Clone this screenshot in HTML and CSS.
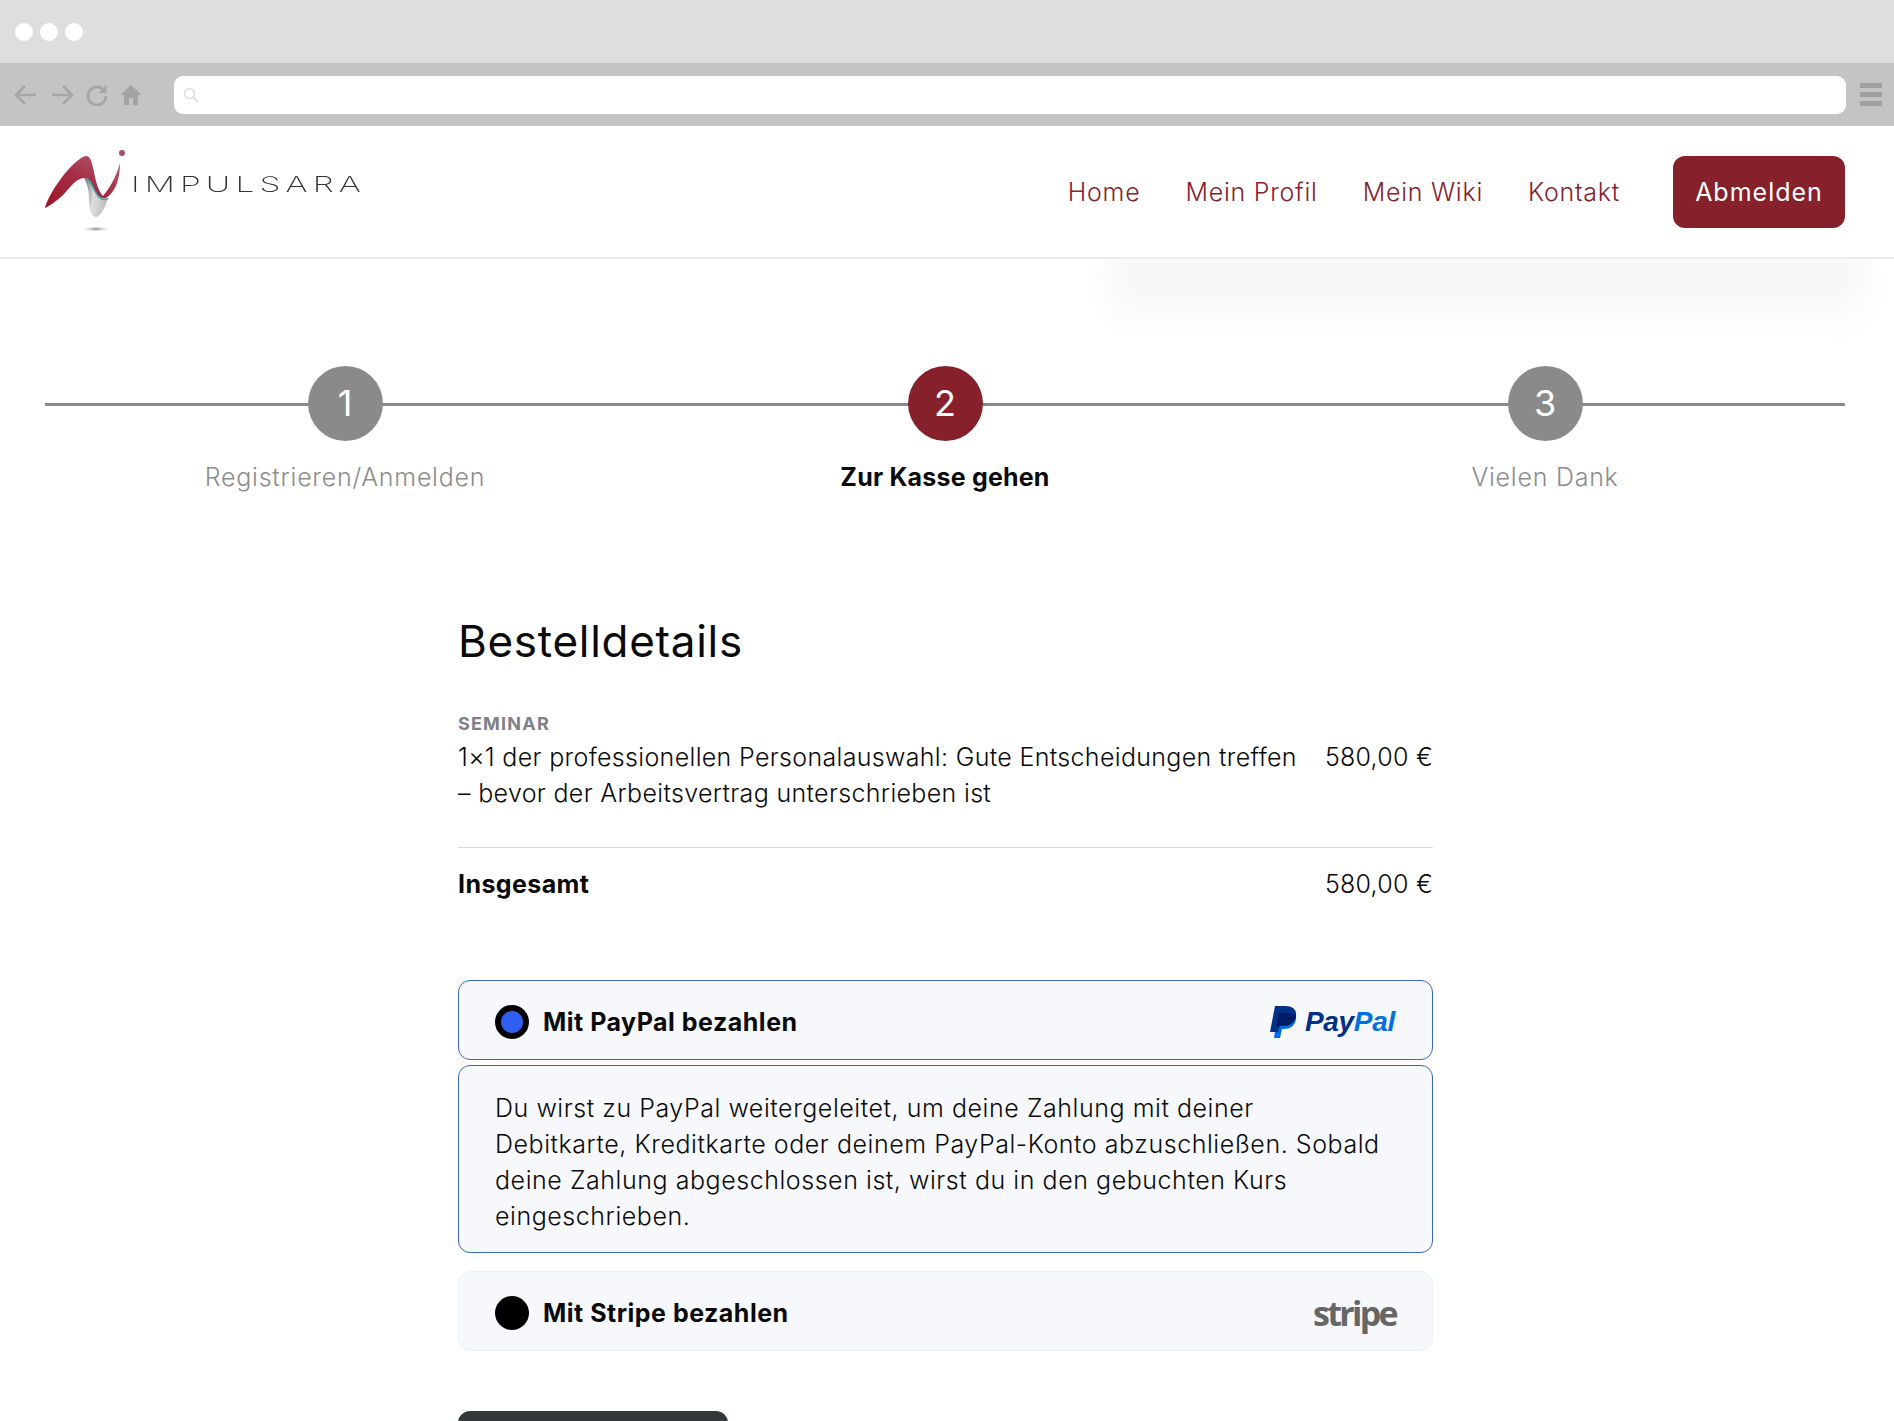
FILE: index.html
```html
<!DOCTYPE html>
<html lang="de">
<head>
<meta charset="utf-8">
<title>Impulsara – Zur Kasse</title>
<link rel="stylesheet" href="styles.css">
</head>
<body>
<div class="browser-top">
  <span class="dot"></span><span class="dot"></span><span class="dot"></span>
</div>
<div class="browser-bar">
  <div class="browser-icons">
    <svg class="bi" width="24" height="24" viewBox="0 0 24 24"><path d="M22 12H2M11 3l-9 9 9 9" fill="none" stroke="#a6a6a6" stroke-width="2.600"/></svg>
    <svg class="bi" width="24" height="24" viewBox="0 0 24 24"><path d="M2 12h20M13 3l9 9-9 9" fill="none" stroke="#a6a6a6" stroke-width="2.600"/></svg>
    <svg class="bi" width="22" height="22" viewBox="0 0 22 22"><path d="M18.500 7A9 9 0 1 0 20 12" fill="none" stroke="#a6a6a6" stroke-width="2.800"/><path d="M20.500 1v8h-8z" fill="#a6a6a6"/></svg>
    <svg class="bi" width="22" height="22" viewBox="0 0 22 22"><path d="M11 1L0.500 11H4v10h5v-7h4v7h5V11h3.500z" fill="#a3a3a3"/></svg>
  </div>
  <div class="address">
    <svg width="16" height="16" viewBox="0 0 16 16"><circle cx="6.500" cy="6.500" r="5" fill="none" stroke="#dcdcdc" stroke-width="1.500"/><path d="M10 10l5 5" stroke="#dcdcdc" stroke-width="2"/></svg>
  </div>
  <div class="burger"><i></i><i></i><i></i></div>
</div>

<header class="site-header">
  <a class="logo">
    <svg width="84" height="86" viewBox="44 149 84 86">
      <defs>
        <linearGradient id="red" x1="0" y1="1" x2="0.800" y2="0"><stop offset="0" stop-color="#9c1528"/><stop offset="0.55" stop-color="#a52c42"/><stop offset="1" stop-color="#b0566a"/></linearGradient>
        <linearGradient id="rib" x1="0" y1="0" x2="1" y2="0.300"><stop offset="0" stop-color="#6f6f6f"/><stop offset="0.5" stop-color="#dedede"/><stop offset="1" stop-color="#c0c0c0"/></linearGradient>
        <radialGradient id="sh"><stop offset="0" stop-color="#7d7d7d"/><stop offset="1" stop-color="#fff" stop-opacity="0"/></radialGradient>
      </defs>
      <path d="M84 178C90 177 92 184 95 191C98 198 102 201 108 199C105 207 101 216 96 217C91 217 89 208 89 198C89 190 87 183 84 178Z" fill="url(#rib)"/>
      <path d="M45 208C48 195 68 165 83 157C90 153 92 162 94 172C96 182 98 190 103 196C108 190 116 178 120 163C120 178 116 192 106 198C100 200 95 192 92 185C90 180 88 178 84 178C76 178 70 188 62 196C55 202 48 207 45 208Z" fill="url(#red)"/>
      <path d="M87 178C92 181 94 192 99 197C102 200 105 200 108 198.500" fill="none" stroke="#2f9c9c" stroke-width="1.400"/>
      <circle cx="122" cy="153" r="3" fill="#a5506a"/>
      <ellipse cx="96" cy="229" rx="15" ry="3" fill="url(#sh)"/>
    </svg>
    <span class="logo-text">IMPULSARA</span>
  </a>
  <nav class="main-nav">
    <a>Home</a><a>Mein Profil</a><a>Mein Wiki</a><a>Kontakt</a>
    <a class="logout">Abmelden</a>
  </nav>
  <div class="header-shadow"></div>
</header>

<section class="stepper">
  <div class="step"><span class="num">1</span><span class="label">Registrieren/Anmelden</span></div>
  <div class="step active"><span class="num">2</span><span class="label">Zur Kasse gehen</span></div>
  <div class="step"><span class="num">3</span><span class="label">Vielen Dank</span></div>
</section>

<main class="content">
  <h1>Bestelldetails</h1>
  <div class="kicker">SEMINAR</div>
  <div class="row item">
    <p>1×1 der professionellen Personalauswahl: Gute Entscheidungen treffen – bevor der Arbeitsvertrag unterschrieben ist</p>
    <span>580,00 €</span>
  </div>
  <div class="row total"><strong>Insgesamt</strong><span>580,00 €</span></div>

  <div class="pay selected">
    <span class="radio on"></span><span class="pay-name">Mit PayPal bezahlen</span>
    <span class="pp">
      <svg width="28" height="34" viewBox="0 0 28 34"><path d="M8 8H20C24 8 27 10 26 14C25 21 20 24 14 24H12L10 33H4Z" fill="#0070e0"/><path d="M5 1H15C23 1 27 5 26 11C25 18 19 21 13 21H10L8 27H0Z" fill="#003087"/><path d="M8 8H19C23 8 25.500 9 26 11C25 18 19 21 13 21H6Z" fill="#001c64"/></svg>
      <span class="pp-word"><b>Pay</b><i>Pal</i></span>
    </span>
  </div>
  <div class="pay-info">Du wirst zu PayPal weitergeleitet, um deine Zahlung mit deiner Debitkarte, Kreditkarte oder deinem PayPal-Konto abzuschließen. Sobald deine Zahlung abgeschlossen ist, wirst du in den gebuchten Kurs eingeschrieben.</div>
  <div class="pay">
    <span class="radio"></span><span class="pay-name">Mit Stripe bezahlen</span>
    <span class="stripe">stripe</span>
  </div>
  <div class="cta"></div>
</main>
</body>
</html>
```

FILE: styles.css
```css
* { box-sizing: border-box; }
html, body { margin: 0; height: 1421px; overflow: hidden; }
html { background: #fff; }
body { font-family: "Inter", "Noto Sans", sans-serif; font-size: 25px; line-height: 36px; color: #0a0a0a; }

.browser-top { height: 63px; background: #dedede; display: flex; align-items: center; gap: 7px; padding: 0 15px; }
.dot { width: 18px; height: 18px; border-radius: 50%; background: #fff; }
.browser-bar { height: 63px; background: #c4c4c4; display: flex; align-items: center; padding: 0 12px 0 14px; }
.browser-icons { display: flex; align-items: center; gap: 12px; width: 160px; }
.address { flex: 1; height: 38px; background: #fff; border-radius: 9px; display: flex; align-items: center; padding-left: 9px; }
.burger { width: 22px; margin-left: 14px; display: flex; flex-direction: column; gap: 4px; }
.burger i { height: 5px; background: #a0a0a0; }

.site-header { position: relative; height: 133px; border-bottom: 2px solid #e8e8e8; padding: 0 49px 0 45px; display: flex; align-items: center; justify-content: space-between; }
.logo { display: flex; align-items: flex-start; align-self: flex-start; margin-top: 23px; margin-left: -1px; position: relative; }
.logo-text { display: block; font-weight: 200; font-size: 21px; line-height: 24px; letter-spacing: 3.200px; color: #333; margin: 24px 0 0 3px; transform: scaleX(1.6); transform-origin: left center; }
.main-nav { display: flex; align-items: center; gap: 45px; letter-spacing: 0.750px; }
.main-nav a { color: #86212c; font-weight: 300; }
.main-nav .logout { margin-left: 8px; width: 172px; height: 72px; line-height: 72px; text-align: center; background: #86212c; color: #fff; border-radius: 12px; font-weight: 400; letter-spacing: 1px; }
.header-shadow { position: absolute; left: 1110px; right: 30px; top: 131px; height: 78px; background: linear-gradient(#f2f2f2, #fff); filter: blur(16px); clip-path: inset(0 -40px -50px -40px); }

.stepper { position: relative; margin: 107px 49px 0 45px; display: grid; grid-template-columns: repeat(3, 1fr); }
.stepper::before { content: ""; position: absolute; left: 0; right: 0; top: 37px; height: 3px; background: #8a8a8a; }
.step { position: relative; display: flex; flex-direction: column; align-items: center; }
.num { width: 75px; height: 75px; border-radius: 50%; background: #8a8a8a; color: #fff; font-size: 36px; line-height: 75px; text-align: center; font-weight: 400; }
.label { margin-top: 18px; color: #8c8c8c; font-weight: 300; letter-spacing: 0.750px; }
.active .num { background: #86212c; }
.active .label { color: #0a0a0a; font-weight: 700; letter-spacing: 0.200px; }

.content { width: 975px; margin: 0 0 0 458px; }
h1 { font-size: 44px; line-height: 56px; font-weight: 400; margin: 118px 0 0; letter-spacing: 0.700px; }
.kicker { margin-top: 43px; font-size: 18px; line-height: 24px; font-weight: 700; color: #80808a; letter-spacing: 1.200px; }
.row { display: flex; justify-content: space-between; }
.item { gap: 20px; padding: 3px 0 36px; border-bottom: 1px solid #dcdcdc; }
.item p { margin: 0; font-weight: 300; letter-spacing: 0.330px; flex: 1; }
.row span { white-space: nowrap; font-weight: 300; letter-spacing: 0.250px; }
.total { padding-top: 18px; margin-bottom: 78px; }
.total strong { font-weight: 700; letter-spacing: 0.400px; }

.pay { height: 80px; border-radius: 12px; border: 1px solid #eef1f6; background: #f6f8fc; display: flex; align-items: center; padding: 3px 36px 0; }
.pay.selected { border-color: #3c66c0; margin-bottom: 5px; }
.radio { width: 34px; height: 34px; border-radius: 50%; background: #000; margin-right: 14px; }
.radio.on { background: #2f5ff0; border: 6px solid #000; }
.pay-name { font-weight: 700; flex: 1; letter-spacing: 0.500px; }
.pp { display: flex; align-items: center; gap: 7px; margin-right: 1px; }
.pp-word { font: italic 700 28px/36px "Liberation Sans", sans-serif; letter-spacing: -0.300px; }
.pp-word b { color: #003087; }
.pp-word i { color: #0070e0; }
.stripe { font: 700 34px/38px "Open Sans", sans-serif; color: #666; letter-spacing: -2.700px; }
.pay-info { height: 188px; margin-bottom: 18px; border: 1px solid #3c66c0; border-radius: 12px; background: #f6f8fc; padding: 24px 44px 24px 36px; font-weight: 300; letter-spacing: 0.550px; }
.cta { width: 270px; height: 60px; margin-top: 60px; background: #33383b; border-radius: 12px; }
```
